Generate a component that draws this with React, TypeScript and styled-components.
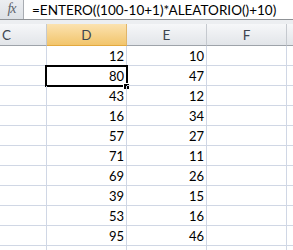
import { Fragment } from 'react';
import styled, { createGlobalStyle } from 'styled-components';

const GlobalStyle = createGlobalStyle`
  html, body {
    margin: 0;
    padding: 0;
    background: #fff;
    overflow: hidden;
  }
  * {
    box-sizing: border-box;
  }
`;

const Window = styled.div`
  width: 293px;
  height: 250px;
  overflow: hidden;
  background: #fff;
  font-family: Lato, 'Liberation Sans', sans-serif;
  display: flex;
  flex-direction: column;
`;

const FormulaBar = styled.div`
  display: flex;
  height: 20px;
  border-bottom: 1px solid #8f9296;
  background: #fff;
`;

const FxBox = styled.div`
  width: 24px;
  display: flex;
  align-items: center;
  justify-content: center;
  background: linear-gradient(#eceef1, #dde1e6);
  border-right: 1px solid #a8acb2;
  color: #5d636b;
  font-family: 'Liberation Serif', serif;
  font-style: italic;
  font-size: 14px;
  letter-spacing: -1px;
  padding-bottom: 1px;
`;

const FormulaText = styled.div`
  flex: 1;
  display: flex;
  align-items: center;
  padding-left: 8px;
  font-size: 13.5px;
  color: #000;
  white-space: nowrap;
`;

const Spacer = styled.div`
  height: 4px;
  background: #eceef1;
`;

const Grid = styled.div`
  flex: 1;
  overflow: hidden;
`;

const GridInner = styled.div`
  display: grid;
  grid-template-columns: repeat(5, 80px);
  margin-left: -33px;
`;

const HeaderCell = styled.div<{ $active?: boolean }>`
  height: 22px;
  display: flex;
  align-items: center;
  justify-content: center;
  font-size: 13.5px;
  color: #3f4650;
  border-right: 1px solid ${(p) => (p.$active ? '#e0b56a' : '#c5c9cf')};
  border-bottom: 1px solid ${(p) => (p.$active ? '#e3a93f' : '#9ea3aa')};
  background: ${(p) =>
    p.$active
      ? 'linear-gradient(#fbe2b0, #f2c56c)'
      : 'linear-gradient(#f6f7f9, #e2e5e9)'};
`;

const Cell = styled.div<{ $selected?: boolean }>`
  position: relative;
  height: 20px;
  display: flex;
  align-items: flex-end;
  justify-content: flex-end;
  padding: 0 2px 1px 0;
  font-size: 13px;
  color: #000;
  border-right: 1px solid #d0d7e5;
  border-bottom: 1px solid #d0d7e5;

  ${(p) =>
    p.$selected &&
    `
    &::before {
      content: '';
      position: absolute;
      left: -2px;
      top: -1px;
      right: -2px;
      bottom: -2px;
      border: 2px solid #000;
      pointer-events: none;
    }
    &::after {
      content: '';
      position: absolute;
      right: -3px;
      bottom: -4px;
      width: 5px;
      height: 5px;
      background: #000;
      outline: 1px solid #fff;
    }
  `}
`;

const columns = ['C', 'D', 'E', 'F', 'G'];
const rows: [number, number][] = [
  [12, 10],
  [80, 47],
  [43, 12],
  [16, 34],
  [57, 27],
  [71, 11],
  [69, 26],
  [39, 15],
  [53, 16],
  [95, 46],
];

export default function App() {
  return (
    <Window>
      <GlobalStyle />
      <FormulaBar>
        <FxBox>fx</FxBox>
        <FormulaText>=ENTERO((100-10+1)*ALEATORIO()+10)</FormulaText>
      </FormulaBar>
      <Spacer />
      <Grid>
        <GridInner>
          {columns.map((c) => (
            <HeaderCell key={c} $active={c === 'D'}>
              {c === 'G' ? '' : c}
            </HeaderCell>
          ))}
          {rows.map(([d, e], i) => (
            <Fragment key={i}>
              <Cell />
              <Cell $selected={i === 1}>{d}</Cell>
              <Cell>{e}</Cell>
              <Cell />
              <Cell />
            </Fragment>
          ))}
          {columns.map((c) => (
            <Cell key={`last${c}`} />
          ))}
        </GridInner>
      </Grid>
    </Window>
  );
}
